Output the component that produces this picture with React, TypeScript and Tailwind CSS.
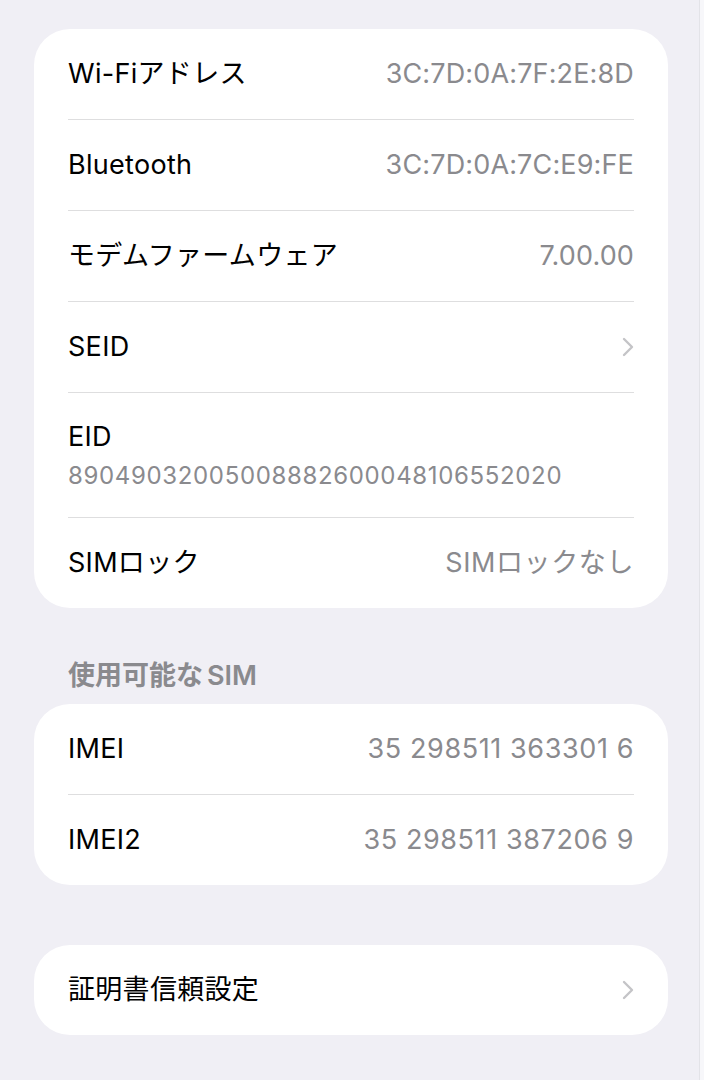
const font = { fontFamily: 'Inter, "Noto Sans CJK JP", sans-serif' };

function Chevron() {
  return (
    <svg width="12" height="20" viewBox="0 0 12 20" fill="none" className="shrink-0">
      <path d="M2 2l8 8-8 8" stroke="#c4c4c7" strokeWidth="2.4" strokeLinecap="round" strokeLinejoin="round" />
    </svg>
  );
}

function Row({ label, value, chevron, last, tight }: { label: string; value?: string; chevron?: boolean; last?: boolean; tight?: boolean }) {
  return (
    <div className={`flex items-center justify-between ${last ? "h-[90px]" : "h-[91px] border-b border-[#dededf]"}`}>
      <span className="text-[27px] text-black tracking-[0.3px]">{label}</span>
      {value && (
        <span className={`text-[27px] text-[#8a8a8e] ${tight ? "tracking-[0.15px]" : "tracking-[0.6px]"}`}>{value}</span>
      )}
      {chevron && <Chevron />}
    </div>
  );
}

export default function App() {
  return (
    <div className="flex w-[704px] h-[1080px] bg-[#f0eff5] overflow-hidden" style={font}>
      <div className="flex-1 pt-[29px] px-[34px] pr-[31px]">
        <div className="rounded-[36px] bg-white px-[34px]">
          <Row label="Wi-Fiアドレス" value="3C:7D:0A:7F:2E:8D" tight />
          <Row label="Bluetooth" value="3C:7D:0A:7C:E9:FE" tight />
          <Row label="モデムファームウェア" value="7.00.00" tight />
          <Row label="SEID" chevron />
          <div className="flex h-[125px] flex-col justify-center gap-[7px] border-b border-[#dededf]">
            <span className="text-[27px] leading-[34px] text-black tracking-[0.3px]">EID</span>
            <span className="text-[24px] leading-[30px] text-[#8a8a8e] tracking-[0.65px]">89049032005008882600048106552020</span>
          </div>
          <Row label="SIMロック" value="SIMロックなし" last />
        </div>

        <div className="mt-[52px] mb-[12px] px-[34px] text-[27px] leading-[32px] font-semibold text-[#8a8a8e]">
          使用可能な<span className="ml-[4px]">SIM</span>
        </div>

        <div className="rounded-[36px] bg-white px-[34px]">
          <Row label="IMEI" value="35 298511 363301 6" />
          <Row label="IMEI2" value="35 298511 387206 9" last />
        </div>

        <div className="mt-[60px] rounded-[36px] bg-white px-[34px]">
          <Row label="証明書信頼設定" chevron last />
        </div>
      </div>
      <div className="w-px bg-[#e3e3e8]" />
      <div className="w-[4px] bg-[#f7f7fa]" />
    </div>
  );
}
